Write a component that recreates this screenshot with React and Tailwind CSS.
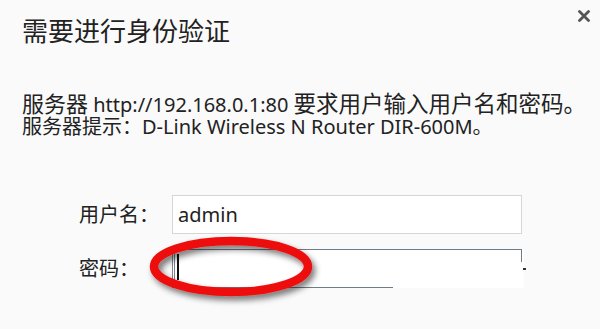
import React from "react";

export default function App() {
  return (
    <div
      className="relative w-[600px] h-[329px] overflow-hidden bg-[#fafafa] text-[#1e1e1e]"
      style={{ fontFamily: '"Noto Sans", "Noto Sans CJK SC", sans-serif' }}
    >
      <div className="flex items-start justify-between pl-[22px] pr-[10px] pt-[16px]">
        <div className="text-[26px] leading-[30px] text-[#222]">需要进行身份验证</div>
        <svg width="12" height="12" viewBox="0 0 12 12" className="mt-[-6px]">
          <path d="M1.5 1.5 L10.5 10.5 M10.5 1.5 L1.5 10.5" stroke="#555" strokeWidth="2.8" strokeLinecap="round" />
        </svg>
      </div>

      <div className="mt-[46px] pl-[22px] text-[20px] leading-[22px] text-[#222]">
        <div className="whitespace-nowrap">
          <span className="text-[22px] leading-[22px]">服务器</span> http://192.168.0.1:80{" "}
          <span className="text-[22.5px] leading-[22px]">要求用户输入用户名和密码。</span>
        </div>
        <div className="whitespace-nowrap">服务器提示：D-Link Wireless N Router DIR-600M。</div>
      </div>

      <div className="mt-[57px] flex flex-col gap-[15px] pl-[79px] text-[20px] text-[#222]">
        <div className="flex items-center">
          <span className="w-[93px]">用户名：</span>
          <div className="flex h-[39px] w-[350px] items-center border border-[#d6d6d6] bg-white pl-[5px] text-[20px] text-[#222]">
            admin
          </div>
        </div>
        <div className="flex items-center">
          <span className="w-[93px]">密码：</span>
          <div className="relative h-[39px] w-[352px] bg-white">
            <div className="absolute left-0 top-0 h-[38px] w-[3px] border-l border-r border-[#7a8590]" />
            <div className="absolute left-0 top-0 h-px w-[350px] bg-[#6f7b86]" />
            <div className="absolute left-[349px] top-0 h-[13px] w-px bg-[#6f7b86]" />
            <div className="absolute left-[351px] top-[19px] h-[2px] w-[3px] bg-[#333]" />
            <div className="absolute left-0 top-[38px] h-px w-[221px] bg-[#6f7b86]" />
            <div className="absolute left-[5px] top-[5px] h-[26px] w-[2px] bg-[#111]" />
          </div>
        </div>
      </div>

      <svg
        className="absolute left-[140px] top-[228px]"
        width="190"
        height="80"
        viewBox="0 0 190 80"
      >
        <defs>
          <filter id="sh" x="-20%" y="-30%" width="140%" height="170%">
            <feGaussianBlur in="SourceAlpha" stdDeviation="3" />
            <feOffset dx="3" dy="4" result="b" />
            <feComponentTransfer>
              <feFuncA type="linear" slope="0.55" />
            </feComponentTransfer>
            <feMerge>
              <feMergeNode />
              <feMergeNode in="SourceGraphic" />
            </feMerge>
          </filter>
        </defs>
        <ellipse
          cx="91"
          cy="38.5"
          rx="77"
          ry="25.5"
          fill="none"
          stroke="#ee0f0f"
          strokeWidth="8.5"
          filter="url(#sh)"
        />
      </svg>
    </div>
  );
}
